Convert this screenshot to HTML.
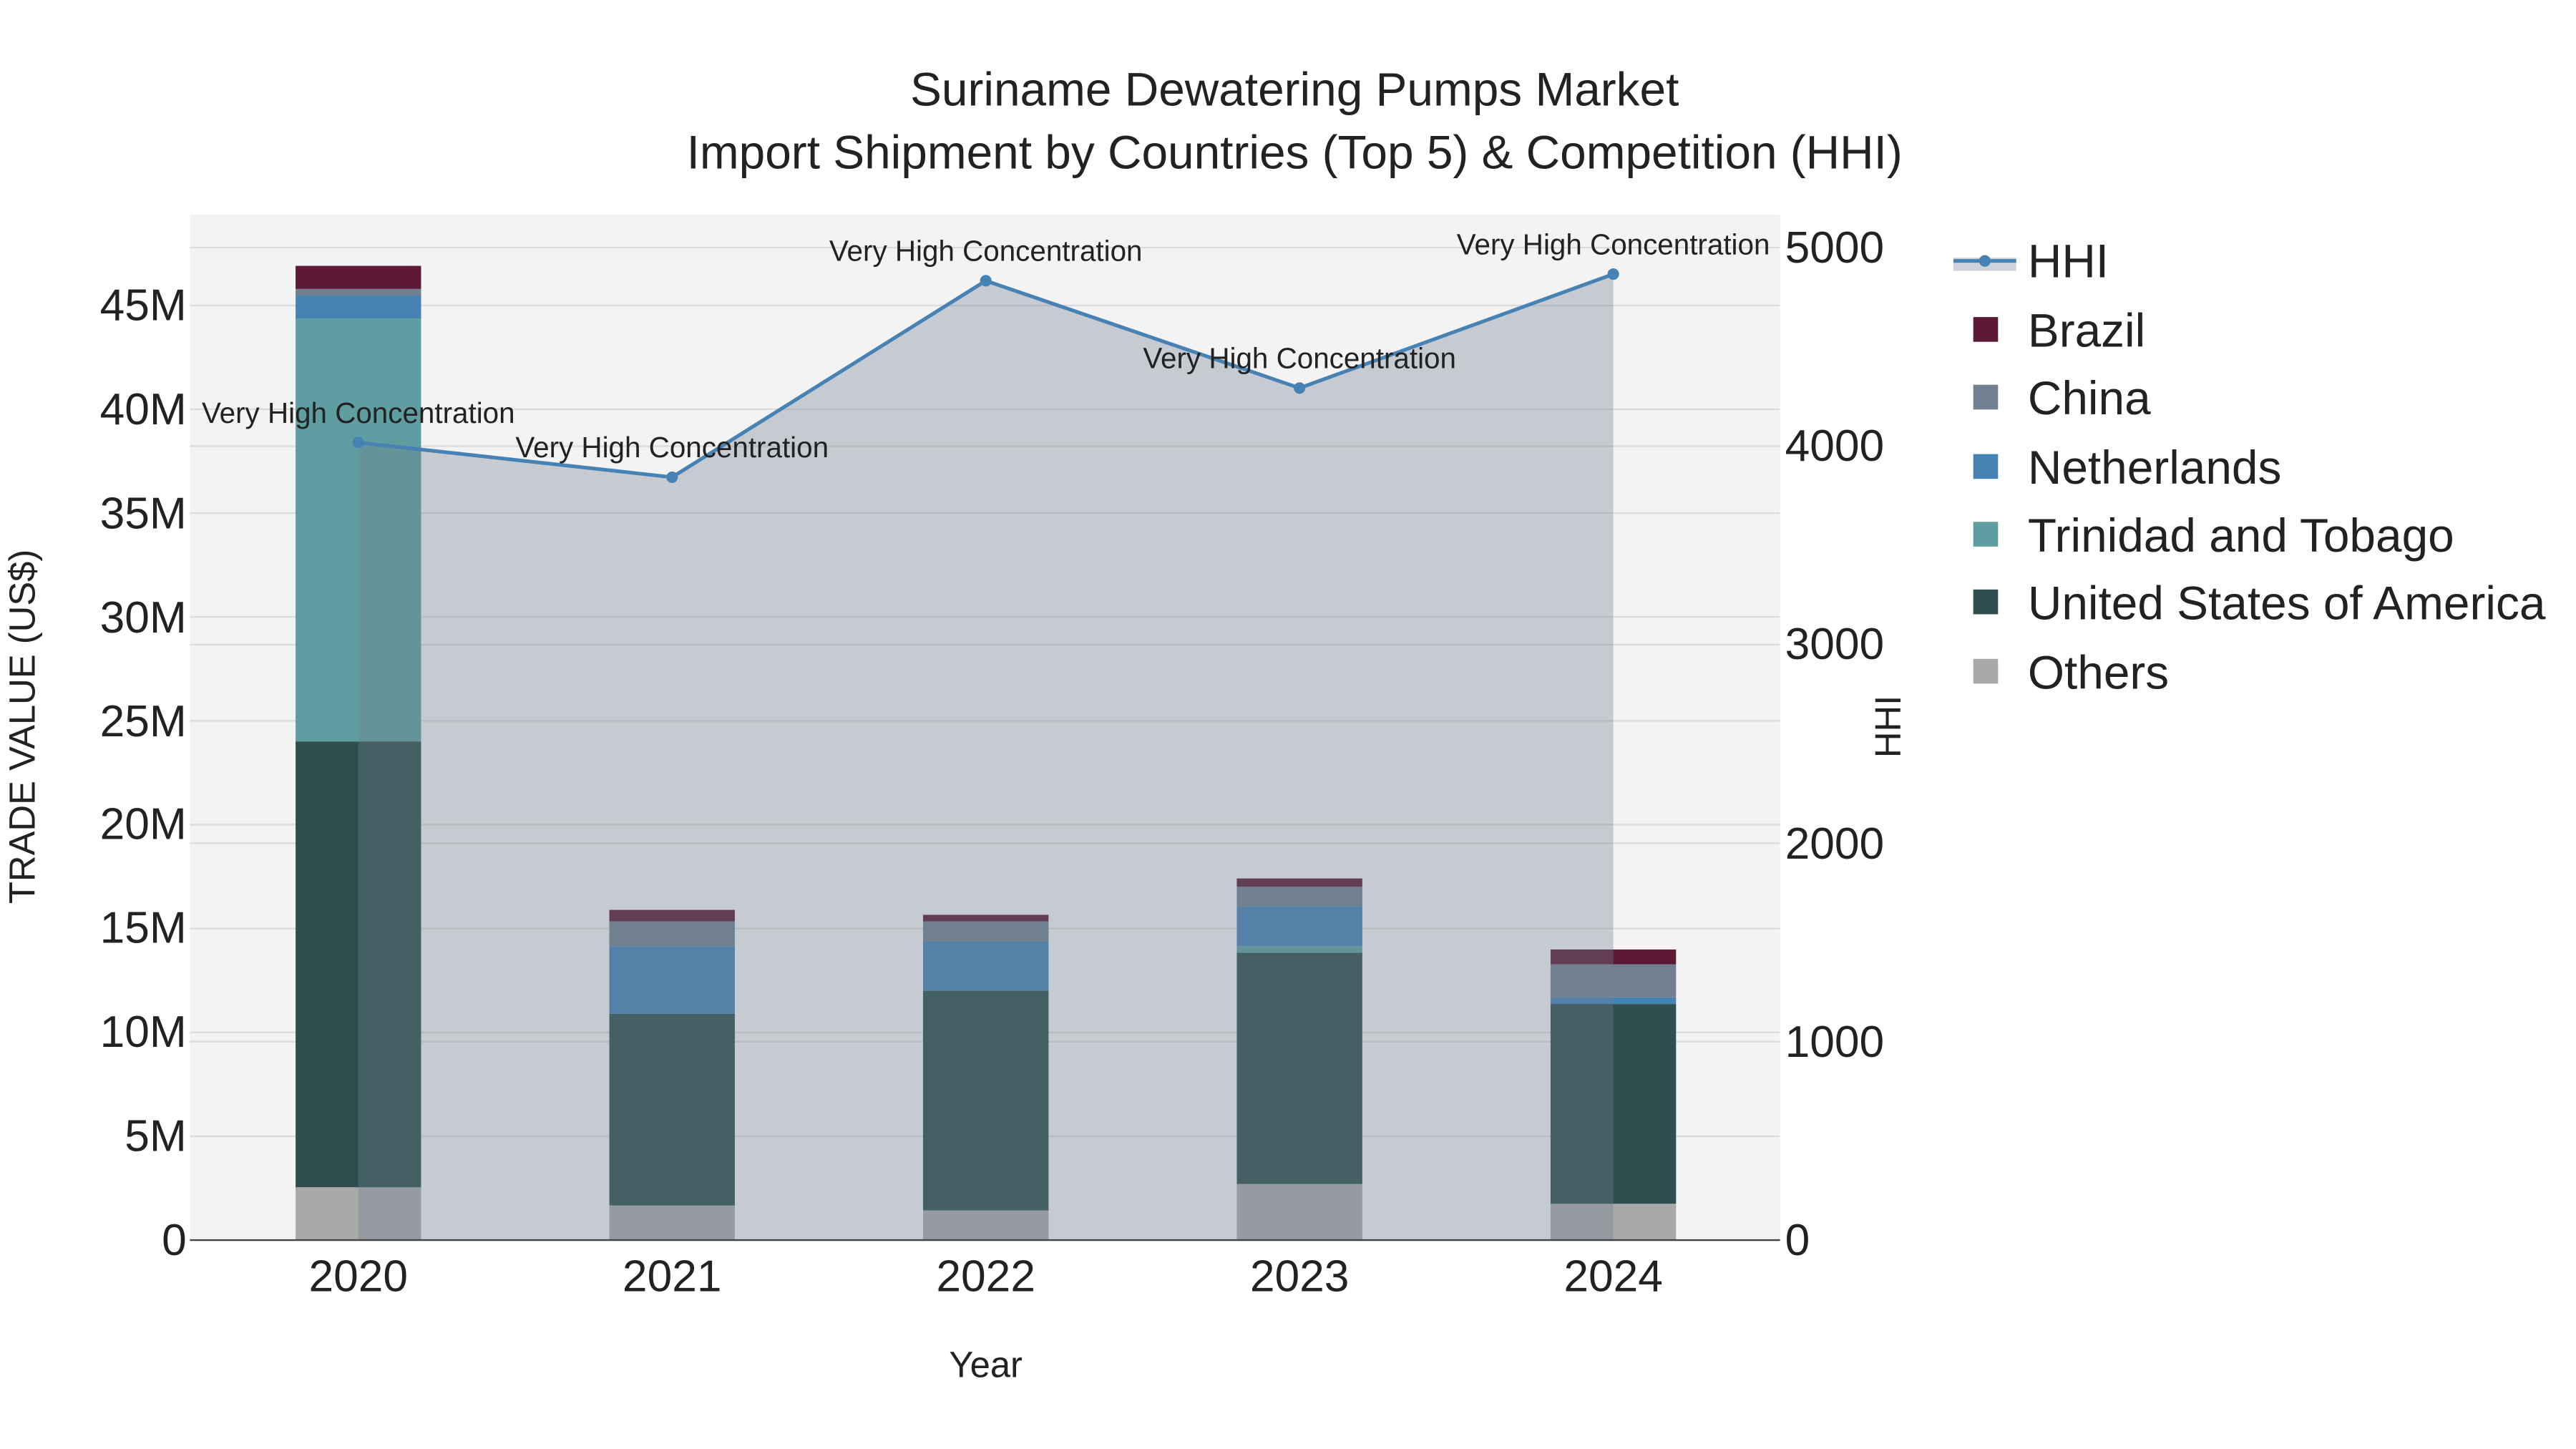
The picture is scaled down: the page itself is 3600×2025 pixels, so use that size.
<!DOCTYPE html>
<html><head><meta charset="utf-8"><style>html,body{margin:0;padding:0;background:#fff}svg{display:block}text{font-family:"Liberation Sans",sans-serif;fill:#222}</style></head>
<body>
<svg width="3600" height="2025" viewBox="0 0 1560 877.5" xmlns="http://www.w3.org/2000/svg">
<rect x="0" y="0" width="1560" height="877.5" fill="#fff"/>
<rect x="115" y="130" width="963" height="621" fill="#f3f3f3"/>
<g stroke="#dcdcdc" stroke-width="1">
<line x1="115" x2="1078" y1="688.1" y2="688.1"/><line x1="115" x2="1078" y1="625.2" y2="625.2"/><line x1="115" x2="1078" y1="562.3" y2="562.3"/><line x1="115" x2="1078" y1="499.4" y2="499.4"/><line x1="115" x2="1078" y1="436.5" y2="436.5"/><line x1="115" x2="1078" y1="373.6" y2="373.6"/><line x1="115" x2="1078" y1="310.7" y2="310.7"/><line x1="115" x2="1078" y1="247.8" y2="247.8"/><line x1="115" x2="1078" y1="185" y2="185"/>
<line x1="115" x2="1078" y1="630.8" y2="630.8"/><line x1="115" x2="1078" y1="510.6" y2="510.6"/><line x1="115" x2="1078" y1="390.4" y2="390.4"/><line x1="115" x2="1078" y1="270.2" y2="270.2"/><line x1="115" x2="1078" y1="150" y2="150"/>
</g>
<g>
<rect x="179" y="719" width="76" height="32" fill="#a9a9a9"/><rect x="179" y="449" width="76" height="270" fill="#2f4f4f"/><rect x="179" y="193" width="76" height="256" fill="#5f9ea0"/><rect x="179" y="179" width="76" height="14" fill="#4682b4"/><rect x="179" y="175" width="76" height="4" fill="#708090"/><rect x="179" y="161" width="76" height="14" fill="#5c1a36"/>
<rect x="369" y="730" width="76" height="21" fill="#a9a9a9"/><rect x="369" y="614" width="76" height="116" fill="#2f4f4f"/><rect x="369" y="573" width="76" height="41" fill="#4682b4"/><rect x="369" y="558" width="76" height="15" fill="#708090"/><rect x="369" y="551" width="76" height="7" fill="#5c1a36"/>
<rect x="559" y="733" width="76" height="18" fill="#a9a9a9"/><rect x="559" y="600" width="76" height="133" fill="#2f4f4f"/><rect x="559" y="570" width="76" height="30" fill="#4682b4"/><rect x="559" y="558" width="76" height="12" fill="#708090"/><rect x="559" y="554" width="76" height="4" fill="#5c1a36"/>
<rect x="749" y="717" width="76" height="34" fill="#a9a9a9"/><rect x="749" y="577" width="76" height="140" fill="#2f4f4f"/><rect x="749" y="573" width="76" height="4" fill="#5f9ea0"/><rect x="749" y="549" width="76" height="24" fill="#4682b4"/><rect x="749" y="537" width="76" height="12" fill="#708090"/><rect x="749" y="532" width="76" height="5" fill="#5c1a36"/>
<rect x="939" y="729" width="76" height="22" fill="#a9a9a9"/><rect x="939" y="608" width="76" height="121" fill="#2f4f4f"/><rect x="939" y="604" width="76" height="4" fill="#4682b4"/><rect x="939" y="584" width="76" height="20" fill="#708090"/><rect x="939" y="575" width="76" height="9" fill="#5c1a36"/>
</g>
<polygon points="217,751 217,268 407,289 597,170 787,235 977,166 977,751" fill="rgba(112,128,144,0.35)"/>
<polyline points="217,268 407,289 597,170 787,235 977,166" fill="none" stroke="#4682b4" stroke-width="2.2"/>
<g fill="#4682b4"><circle cx="217" cy="268" r="3.5"/><circle cx="407" cy="289" r="3.5"/><circle cx="597" cy="170" r="3.5"/><circle cx="787" cy="235" r="3.5"/><circle cx="977" cy="166" r="3.5"/></g>
<line x1="115" x2="1078" y1="751" y2="751" stroke="#444" stroke-width="1"/>
<g font-size="17.5" text-anchor="middle">
<text x="217" y="256">Very High Concentration</text><text x="407" y="277">Very High Concentration</text><text x="597" y="158">Very High Concentration</text><text x="787" y="223">Very High Concentration</text><text x="977" y="154">Very High Concentration</text>
</g>
<g font-size="28.5" text-anchor="middle">
<text x="784" y="64">Suriname Dewatering Pumps Market</text>
<text x="784" y="102">Import Shipment by Countries (Top 5) &amp; Competition (HHI)</text>
</g>
<g font-size="27" text-anchor="end">
<text x="113" y="760">0</text><text x="113" y="697">5M</text><text x="113" y="634">10M</text><text x="113" y="571">15M</text><text x="113" y="508">20M</text><text x="113" y="446">25M</text><text x="113" y="383">30M</text><text x="113" y="320">35M</text><text x="113" y="257">40M</text><text x="113" y="194">45M</text>
</g>
<g font-size="27" text-anchor="start">
<text x="1081" y="760">0</text><text x="1081" y="640">1000</text><text x="1081" y="520">2000</text><text x="1081" y="399">3000</text><text x="1081" y="279">4000</text><text x="1081" y="159">5000</text>
</g>
<g font-size="27" text-anchor="middle">
<text x="217" y="782">2020</text><text x="407" y="782">2021</text><text x="597" y="782">2022</text><text x="787" y="782">2023</text><text x="977" y="782">2024</text>
</g>
<text x="597" y="834" font-size="22" text-anchor="middle">Year</text>
<text transform="translate(21,440) rotate(-90)" font-size="22" text-anchor="middle">TRADE VALUE (US$)</text>
<text transform="translate(1151,440) rotate(-90)" font-size="22" text-anchor="middle">HHI</text>
<rect x="1183" y="156" width="38" height="8" fill="rgba(112,128,144,0.35)"/>
<line x1="1183" x2="1221" y1="158" y2="158" stroke="#4682b4" stroke-width="2.2"/><circle cx="1202" cy="158" r="3.5" fill="#4682b4"/>
<g font-size="28.5">
<text x="1228" y="168">HHI</text>
<rect x="1195" y="192" width="15" height="15" fill="#5c1a36"/><text x="1228" y="210">Brazil</text>
<rect x="1195" y="233" width="15" height="15" fill="#708090"/><text x="1228" y="251">China</text>
<rect x="1195" y="275" width="15" height="15" fill="#4682b4"/><text x="1228" y="293">Netherlands</text>
<rect x="1195" y="316" width="15" height="15" fill="#5f9ea0"/><text x="1228" y="334">Trinidad and Tobago</text>
<rect x="1195" y="357" width="15" height="15" fill="#2f4f4f"/><text x="1228" y="375">United States of America</text>
<rect x="1195" y="399" width="15" height="15" fill="#a9a9a9"/><text x="1228" y="417">Others</text>
</g>
</svg>
</body></html>
